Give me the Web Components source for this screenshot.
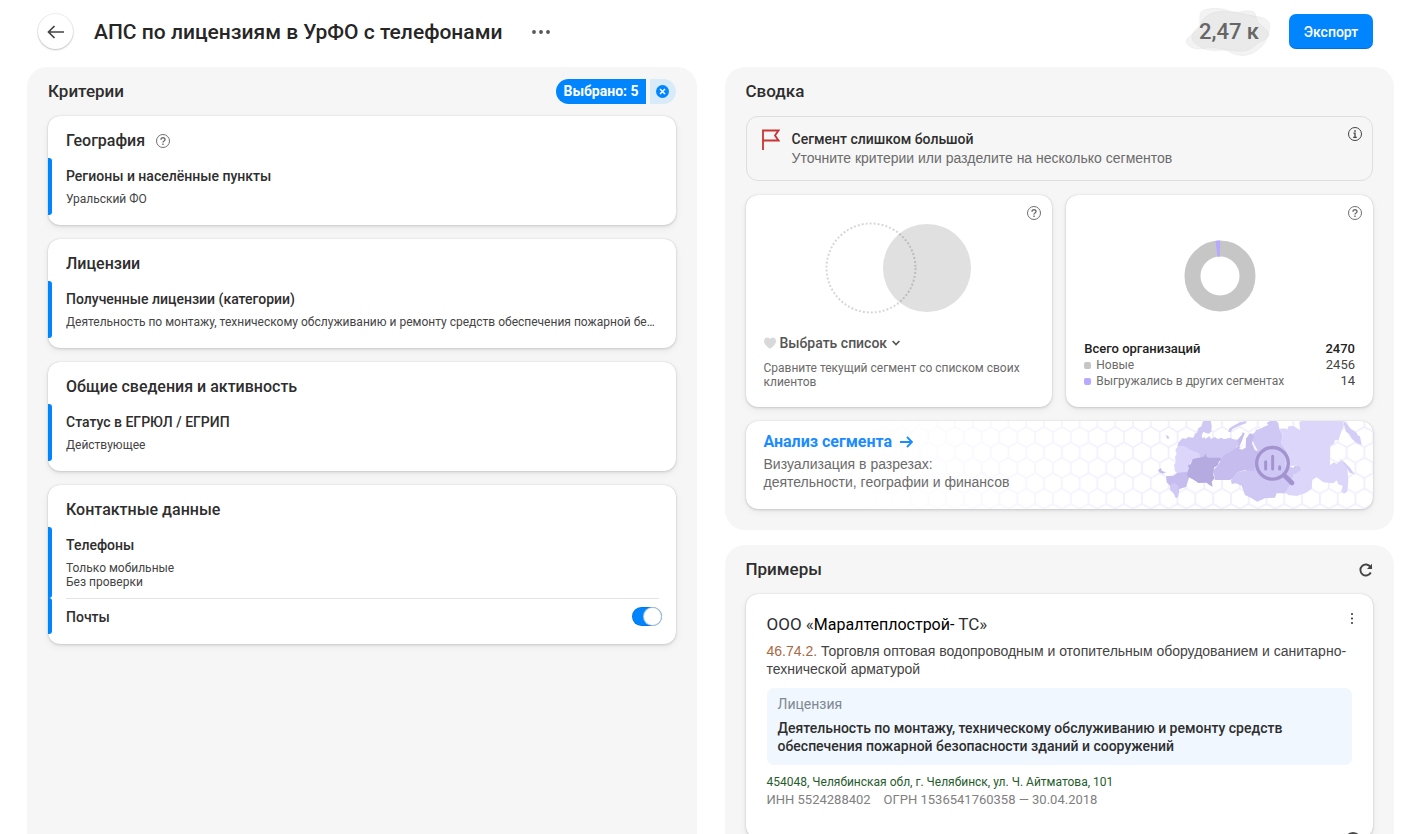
<!DOCTYPE html>
<html lang="ru">
<head>
<meta charset="utf-8">
<meta name="viewport" content="width=device-width, initial-scale=1">
<title>АПС по лицензиям в УрФО с телефонами</title>
<style>
  :root {
    --ui: Roboto, "Liberation Sans", sans-serif;
    --text: "Liberation Sans", Roboto, sans-serif;
    --ink: #2e2e2e;
    --muted: #6b6b6b;
    --blue: #0085ff;
    --panel: #f6f6f6;
    --shadow: 0 0 1px rgba(0,0,0,.2), 0 1px 3px rgba(0,0,0,.14), 0 3px 8px rgba(0,0,0,.05);
  }
  body { margin: 0; background: #fff; color: var(--ink); font: 14px/18px var(--ui); }
</style>
</head>
<body>
<segment-page></segment-page>

<script>
const define = (name, html, setup) => {
  const tpl = document.createElement('template');
  tpl.innerHTML = html;
  customElements.define(name, class extends HTMLElement {
    constructor() {
      super();
      this.attachShadow({ mode: 'open' }).append(tpl.content.cloneNode(true));
    }
    connectedCallback() { if (setup) setup.call(this, this.shadowRoot); }
  });
};

/* Small round hint mark: "?" by default, "i" with kind="info" */
define('hint-icon', `
<style>
  :host { display: block; width: 14px; height: 14px; }
  svg { display: block; width: 14px; height: 14px; overflow: visible; fill: none; stroke: #707070; }
  .i { display: none; }
  :host([kind=info]) .i { display: block; }
  :host([kind=info]) .q { display: none; }
  :host([kind=info]) svg { stroke: #444; }
</style>
<svg viewBox="0 0 14 14" aria-hidden="true">
  <circle cx="7" cy="7" r="6.5"/>
  <g class="q" stroke-width="1.4"><path d="M5 5.7C5 4.400 5.900 3.700 7 3.700s2 .7 2 1.800c0 1.500-2 1.400-2 3"/><path d="M7 9.500v1.400"/></g>
  <g class="i" stroke-width="1.600"><path d="M5.500 6.200H7v4.200M5.200 10.400h3.600" stroke-width="1.300"/><path d="M7 3.200v1.500"/></g>
</svg>`);

define('count-blob', `
<style>
  :host { display: grid; place-items: center; width: 86px; height: 48px; }
  svg, span { grid-area: 1 / 1; }
  svg { width: 86px; height: 48px; }
  span { padding-left: 2px; color: #666; font: 500 22px/26px var(--ui); }
</style>
<svg viewBox="135 20 258 147" aria-hidden="true">
  <g fill="#d0d0d0" fill-opacity=".26" stroke="#bbb" stroke-opacity=".22" stroke-width="2">
    <path d="M178 45C178 25 200 20 240 22C265 24 270 34 300 32C330 26 350 26 351 50C352 70 388 82 390 102C385 120 365 118 350 132C325 160 290 152 262 148C225 152 190 155 160 125C145 110 158 90 175 78C180 68 177 58 178 45Z"/>
    <path d="M180 75C185 40 225 30 255 30C290 36 320 38 350 46C390 50 396 68 390 90C383 110 384 125 362 142C340 166 305 172 275 158C250 142 225 142 200 142C175 150 140 145 136 122C138 104 170 95 180 75Z"/>
  </g>
</svg>
<span><slot></slot></span>`);

define('page-header', `
<style>
  :host { display: flex; align-items: center; box-sizing: border-box; min-height: 67px; padding: 0 45px 4px 38px; }
  button { border: 0; padding: 0; background: none; cursor: pointer; font: inherit; }
  .back { display: grid; place-items: center; width: 35px; height: 35px; border-radius: 50%; background: #fff; box-shadow: 0 0 0 1px rgba(0,0,0,.06), 0 1px 2px rgba(0,0,0,.2); }
  h1 { margin: 0 28px 0 21px; font: 500 21px/28px var(--ui); color: #262626; }
  .export { margin-left: 18px; width: 84px; height: 35px; border-radius: 7px; background: var(--blue); color: #fff; font: 500 14px/20px var(--ui); box-shadow: inset 0 -1px 0 rgba(0,0,0,.15); }
  count-blob { margin-left: auto; }
  svg { display: block; }
</style>
<button class="back" aria-label="Назад">
  <svg width="18" height="14" viewBox="0 0 18 14" fill="none" stroke="#444" stroke-width="1.700"><path d="M17 7H2M7.500 1L1.500 7l6 6"/></svg>
</button>
<h1><slot></slot></h1>
<button aria-label="Ещё">
  <svg width="22" height="20" viewBox="0 0 22 20" fill="#555"><circle cx="4" cy="10" r="1.900"/><circle cx="11" cy="10" r="1.900"/><circle cx="18" cy="10" r="1.900"/></svg>
</button>
<count-blob>2,47 к</count-blob>
<button class="export">Экспорт</button>`);

define('side-panel', `
<style>
  :host { display: block; box-sizing: border-box; min-width: 0; padding: 0 21px 21px; border-radius: 20px; background: var(--panel); }
  header { display: flex; align-items: center; justify-content: space-between; height: 49px; }
  h2 { margin: 0 0 2px; font: 500 17px/24px var(--ui); }
  .body { display: grid; gap: 14px; }
</style>
<header><h2><slot name="title"></slot></h2><slot name="action"></slot></header>
<div class="body"><slot></slot></div>`);

define('selected-count', `
<style>
  :host { display: flex; gap: 4px; }
  button { height: 25px; border: 0; padding: 0 8px; font: 700 14px/25px var(--ui); cursor: pointer; }
  .count { padding: 0 7px; border-radius: 13px 0 0 13px; background: var(--blue); color: #fff; }
  .clear { width: 26px; padding: 0 6px; border-radius: 0 13px 13px 0; background: #d9eaf9; }
  svg { display: block; }
</style>
<button class="count"><slot></slot></button>
<button class="clear" aria-label="Сбросить">
  <svg width="13" height="13" viewBox="0 0 13 13"><circle cx="6.500" cy="6.500" r="6.500" fill="#0085ff"/><path d="M4 4l5 5M9 4L4 9" stroke="#fff" stroke-width="1.500"/></svg>
</button>`);

define('criteria-card', `
<style>
  :host { display: block; min-width: 0; padding: 13px 0 10px; border-radius: 12px; background: #fff; box-shadow: var(--shadow); }
  header { display: flex; align-items: center; gap: 11px; padding: 0 18px 5px; }
  h3 { margin: 0; font: 500 16px/24px var(--ui); }
</style>
<header><h3><slot name="title"></slot></h3><slot name="hint"></slot></header>
<slot></slot>`);

define('criteria-item', `
<style>
  :host { display: flex; position: relative; padding: 0 17px 0 18px; }
  :host::before { content: ""; position: absolute; inset: 0 auto 0 0; width: 4px; border-radius: 0 3px 3px 0; background: var(--blue); }
  .text { flex: 1; min-width: 0; padding: 8px 0 9px; }
  h4 { margin: 0; font: 500 14px/20px var(--ui); }
  ::slotted(p) { margin: 6px 0 0; color: #444; font: 12px/14px var(--ui); overflow: hidden; white-space: nowrap; text-overflow: ellipsis; }
  :host([divided]) { align-items: center; }
  :host([divided]) .text { padding: 8px 0 7px; border-top: 1px solid #e3e3e3; }
  ::slotted([slot=control]) { margin: 0 -3px 0 -27px; }
</style>
<div class="text"><h4><slot name="title"></slot></h4><slot></slot></div>
<slot name="control"></slot>`);

define('toggle-switch', `
<style>
  :host { display: block; }
  input { display: block; appearance: none; box-sizing: border-box; width: 30px; height: 19px; margin: 0; border-radius: 10px; background: #ccc; cursor: pointer; box-shadow: inset 0 0 0 1px rgba(0,0,0,.1); }
  input::before { content: ""; display: block; width: 17px; height: 17px; margin: 1px; border-radius: 50%; background: #fff; box-shadow: 0 0 0 1px rgba(200,205,210,.9); }
  input:checked { background: var(--blue); }
  input:checked::before { margin-left: 12px; }
</style>
<input type="checkbox" role="switch" checked>`,
function (root) { root.querySelector('input').setAttribute('aria-label', this.getAttribute('label')); });

define('warning-box', `
<style>
  :host { display: flex; align-items: flex-start; box-sizing: border-box; min-height: 65px; padding: 12px 10px 0 14px; border: 1px solid #dedede; border-radius: 12px; }
  .flag { margin: 0 12px 0 1px; }
  .text { flex: 1; }
  h3 { margin: 0; font: 500 14px/20px var(--ui); }
  p { margin: 0; color: var(--muted); font: 14px/19px var(--text); }
  hint-icon { margin-top: -2px; }
</style>
<svg class="flag" width="18" height="21" viewBox="0 0 18 21" fill="none" stroke="#c93434" stroke-width="1.800" aria-hidden="true"><path d="M1 21V1.500h15.500l-3.500 5 3.500 5H1"/></svg>
<div class="text"><h3><slot name="title"></slot></h3><p><slot></slot></p></div>
<hint-icon kind="info"></hint-icon>`);

define('stat-card', `
<style>
  :host { display: flex; flex-direction: column; position: relative; box-sizing: border-box; min-width: 0; min-height: 212px; padding: 11px 18px 18px; border-radius: 12px; background: #fff; box-shadow: var(--shadow); }
  hint-icon { position: absolute; top: 11px; right: 11px; }
  .figure { display: grid; flex: 1; place-items: start center; }
</style>
<hint-icon></hint-icon>
<div class="figure"><slot name="figure"></slot></div>
<slot></slot>`);

define('list-compare', `
<style>
  :host { display: block; }
  .pick { display: flex; align-items: center; margin-bottom: 8px; color: #555; }
  select { appearance: none; field-sizing: content; border: 0; margin: 0 5px 0 4px; padding: 0; background: none; color: #555; font: 500 14px/20px var(--ui); }
  p { margin: 0; color: var(--muted); font: 12px/14px var(--ui); max-width: 264px; }
</style>
<div class="pick">
  <svg width="12" height="12" viewBox="0 0 12 12" fill="#d9d9d9" aria-hidden="true"><path d="M6 11.800C3 9.800 0 7 0 3.900 0 1.800 1.500.5 3.200.5 4.500.5 5.500 1.200 6 2.200 6.500 1.200 7.500.5 8.800.5 10.500.5 12 1.800 12 3.900c0 3.100-3 5.900-6 7.900z"/></svg>
  <select aria-label="Список клиентов"><option>Выбрать список</option></select>
  <svg width="8" height="6" viewBox="0 0 8 6" fill="none" stroke="#555" stroke-width="1.700" aria-hidden="true"><path d="M.6 1L4 4.500 7.400 1"/></svg>
</div>
<p><slot></slot></p>`);

define('venn-figure', `
<style>:host, svg { display: block; } :host { margin-top: 16px; }</style>
<svg width="148" height="92" viewBox="0 0 148 92" aria-hidden="true">
  <circle cx="102" cy="46" r="44" fill="#e0e0e0"/>
  <circle cx="46" cy="46" r="44.500" fill="none" stroke="#000" stroke-opacity=".16" stroke-width="2" stroke-dasharray="2 2"/>
</svg>`);

define('donut-figure', `
<style>:host, svg { display: block; } :host { margin-top: 34px; }</style>
<svg width="72" height="72" viewBox="0 0 72 72" fill="none" stroke-width="16" aria-hidden="true">
  <circle cx="36" cy="36" r="27.500" stroke="#c6c6c6"/>
  <path d="M32.500 8.700A27.500 27.500 0 0 1 36 8.500" stroke="#b9a8ff"/>
</svg>`);

define('totals-table', `
<style>
  :host { display: block; }
  table { width: 100%; border-collapse: collapse; font: 12px/16px var(--ui); }
  th, td { padding: 0; text-align: left; font-weight: 400; color: var(--muted); }
  td { text-align: right; font-size: 13px; color: #444; }
  .sum th, .sum td { font-weight: 500; color: #222; font-size: 13px; }
  i { display: inline-block; width: 7px; height: 7px; margin-right: 5px; border-radius: 2px; background: #c6c6c6; }
  i.old { background: #b9a8ff; }
</style>
<table>
  <tr class="sum"><th scope="row">Всего организаций</th><td>2470</td></tr>
  <tr><th scope="row"><i></i>Новые</th><td>2456</td></tr>
  <tr><th scope="row"><i class="old"></i>Выгружались в других сегментах</th><td>14</td></tr>
</table>`);

define('russia-map', `
<style>:host, svg { display: block; }</style>
<svg width="520" height="88" viewBox="0 0 520 88" aria-hidden="true">
  <defs>
    <pattern id="hex" width="53.400" height="92.400" patternUnits="userSpaceOnUse" x="136" y="235.600">
      <path d="M0 0V30.800L26.700 46.200L53.400 30.800V0M26.700 46.200V77L0 92.400M26.700 77L53.400 92.400" fill="none" stroke="#f0ecfd" stroke-width="4.500"/>
    </pattern>
    <linearGradient id="fade"><stop offset="0" stop-color="#fff" stop-opacity="0"/><stop offset=".6" stop-color="#fff"/></linearGradient>
    <mask id="m"><rect width="520" height="88" fill="url(#fade)"/></mask>
  </defs>
  <g mask="url(#m)"><g transform="translate(297 -6) scale(.3333)"><rect x="-900" y="0" width="1600" height="320" fill="url(#hex)"/></g></g>
  <g transform="translate(297 -6) scale(.3333)" stroke-linejoin="round">
    <g fill="#cfc8f4">
      <path d="M82 93L86 82 97 70 108 71 115 66 130 68 135 57 142 52 145 40 154 34 158 22 164 10H180L185 30 184 50 176 56 166 53 160 50 155 62 157 70 165 66 166 72 178 63 183 72 195 66 203 72 215 68 222 73 240 68 250 73 264 74 262 90 255 105 240 118 215 135 200 130 168 132 140 122 120 108Z"/>
      <path d="M300 62L315 52 318 44 330 42 340 36 355 30 350 24 360 18 372 12 385 24 388 42 398 60 394 85 412 110 405 150 430 158 434 152 448 150 455 165 440 178 430 180 425 205 405 235 380 235 375 248 345 250 322 260 305 250 285 240 275 212 258 205 245 207 243 195 262 172 315 160 322 105Z"/>
      <path d="M235 50L238 40 250 32 270 22 290 18 288 25 268 32 248 42 242 52ZM47 61L54 62 58 68 53 73Z"/>
    </g>
    <path fill="#dcd6fb" d="M84 93L100 92 122 105 148 115 150 126 128 134 118 150 112 172 85 178 75 168 72 150 77 142 75 125 80 118 76 105ZM388 42L405 40 412 44 415 34 430 33 450 46 448 22 460 14H575L582 30 572 55 566 74 555 76 552 86 541 92 540 150 552 142 560 147 570 138 583 142 592 152 595 200 592 230 582 236 574 230 578 212 565 208 560 196 550 205 520 202 500 187 487 195 485 222 465 235 440 243 415 240 405 232 425 205 430 180 455 165 448 150 405 155 412 110 394 85 398 60Z"/>
    <path fill="#d4cdf7" d="M578 14L592 28 602 42 618 52 625 62 630 64 635 90 620 84 606 72 596 56 588 50ZM568 130L585 143 600 158 614 178 600 174 590 158Z"/>
    <path fill="#c6bdee" d="M48 184L70 182 82 174 110 170 118 186 108 216 88 222 84 245 78 249 72 236 62 226 60 212 50 202ZM24 166L33 159 36 168 48 172 38 176 28 172ZM213 132L222 120 240 112 262 95 262 75 275 60 278 52 284 55 278 72 268 95 276 100 285 92 286 68 294 62 302 54 312 62 306 86 315 105 325 110 318 150 312 168 285 165 262 172 248 190 240 195 195 195 190 165 205 150Z"/>
    <path fill="#d0c8f5" d="M60 210L74 203 84 212 86 222 84 245 78 249 72 236 62 226Z"/>
    <path fill="#b5abe0" d="M128 132L150 127 162 125 166 115 170 126 178 128H210L214 134 206 140 205 150 192 158 190 180 194 190 185 200 188 215 178 210 170 203 145 204 132 195 115 186 110 178 116 160 114 150 122 148Z"/>
    <path fill="#fff" d="M267 100L275 104 287 98 288 70 294 64 286 62 280 72 279 92Z"/>
    <g fill="none" stroke="#a394d0">
      <circle cx="367.500" cy="145" r="47.500" stroke-width="10" fill="#cfc8f4" fill-opacity=".5"/>
      <path d="M403 181L426 204" stroke-width="14" stroke-linecap="round"/>
      <path d="M347 140V162M368 124V162M389 155V162" stroke-width="9" stroke-linecap="round"/>
    </g>
  </g>
</svg>`);

define('analysis-card', `
<style>
  :host { display: block; position: relative; box-sizing: border-box; min-height: 88px; padding: 9px 18px 17px; border-radius: 12px; background: #fff; box-shadow: var(--shadow); overflow: hidden; }
  russia-map { position: absolute; top: 0; right: 0; }
  .text { position: relative; }
  a { display: inline-flex; align-items: center; gap: 8px; color: #1a8cff; text-decoration: none; font: 700 16px/24px var(--ui); }
  p { margin: 1px 0 0; color: var(--muted); font: 14px/18px var(--text); }
</style>
<russia-map></russia-map>
<div class="text">
  <a href="#analysis">Анализ сегмента <svg width="13" height="12" viewBox="0 0 13 12" fill="none" stroke="currentColor" stroke-width="1.800" aria-hidden="true"><path d="M0 6h12M7 1l5 5-5 5"/></svg></a>
  <p>Визуализация в разрезах:<br>деятельности, географии и финансов</p>
</div>`);

define('refresh-button', `
<style>
  button { display: block; border: 0; padding: 0; background: none; cursor: pointer; }
  svg { display: block; }
</style>
<button aria-label="Обновить">
  <svg width="14" height="14" viewBox="0 0 14 14" fill="none" stroke="#444" stroke-width="1.900"><path d="M11.800 9.500A5.500 5.500 0 1 1 11.500 4L12.500 5.500"/><path d="M13 .8V6H8z" fill="#444" stroke="none"/></svg>
</button>`);

define('company-card', `
<style>
  :host { display: block; position: relative; box-sizing: border-box; padding: 19px 21px 30px; border-radius: 12px; background: #fff; box-shadow: var(--shadow); }
  button { position: absolute; border: 0; padding: 0; background: none; cursor: pointer; }
  button svg { display: block; }
  .more { top: 17px; right: 18px; }
  .help { bottom: -12px; right: 11px; }
  h3 { margin: 0 0 6px; font: 400 17px/22px var(--ui); }
  h3 b { font-weight: 400; font-size: 16px; color: #000; }
  .desc { margin: 0 0 10px; color: #444; font: 14px/18px var(--text); }
  .desc span { color: #a8693f; }
  .license { padding: 8px 11px 10px; border-radius: 7px; background: #f0f7ff; }
  .license span { display: block; margin-bottom: 7px; color: #808891; font: 14px/16px var(--ui); }
  .license p { margin: 0; font: 500 14px/18px var(--ui); }
  address { margin-top: 9px; color: #1f5c2c; font: 12px/17px var(--ui); }
  .ids { display: flex; gap: 13px; color: #808080; font: 13px/17px var(--ui); }
</style>
<button class="more" aria-label="Действия">
  <svg width="6" height="14" viewBox="0 0 6 14" fill="#444"><circle cx="3" cy="3" r="1.100"/><circle cx="3" cy="7.500" r="1.100"/><circle cx="3" cy="12" r="1.100"/></svg>
</button>
<h3>ООО «<b>Маралтеплострой-</b> ТС»</h3>
<p class="desc"><span>46.74.2.</span> Торговля оптовая водопроводным и отопительным оборудованием и санитарно-технической арматурой</p>
<div class="license"><span>Лицензия</span><p>Деятельность по монтажу, техническому обслуживанию и ремонту средств обеспечения пожарной безопасности зданий и сооружений</p></div>
<address>454048, Челябинская обл, г. Челябинск, ул. Ч. Айтматова, 101</address>
<div class="ids"><span>ИНН 5524288402</span><span>ОГРН 1536541760358 — 30.04.2018</span></div>
<button class="help" aria-label="Помощь"><svg width="18" height="18" viewBox="0 0 18 18"><circle cx="9" cy="9" r="9" fill="#4a4a4a"/></svg></button>`);

define('segment-page', `
<style>
  :host { display: block; }
  main { display: grid; grid-template-columns: minmax(0, 1fr) minmax(0, 1fr); gap: 28px; padding: 0 24px 0 27px; }
  .column { display: grid; align-content: start; gap: 15px; }
  .pair { display: grid; grid-template-columns: minmax(0, 1fr) minmax(0, 1fr); gap: 14px; }
</style>
<page-header>АПС по лицензиям в УрФО с телефонами</page-header>
<main>
  <side-panel>
    <span slot="title">Критерии</span>
    <selected-count slot="action">Выбрано: 5</selected-count>
    <criteria-card>
      <span slot="title">География</span><hint-icon slot="hint"></hint-icon>
      <criteria-item><span slot="title">Регионы и населённые пункты</span><p>Уральский ФО</p></criteria-item>
    </criteria-card>
    <criteria-card>
      <span slot="title">Лицензии</span>
      <criteria-item><span slot="title">Полученные лицензии (категории)</span><p>Деятельность по монтажу, техническому обслуживанию и ремонту средств обеспечения пожарной безопасности зданий и сооружений</p></criteria-item>
    </criteria-card>
    <criteria-card>
      <span slot="title">Общие сведения и активность</span>
      <criteria-item><span slot="title">Статус в ЕГРЮЛ / ЕГРИП</span><p>Действующее</p></criteria-item>
    </criteria-card>
    <criteria-card>
      <span slot="title">Контактные данные</span>
      <criteria-item><span slot="title">Телефоны</span><p>Только мобильные<br>Без проверки</p></criteria-item>
      <criteria-item divided><span slot="title">Почты</span><toggle-switch slot="control" label="Почты"></toggle-switch></criteria-item>
    </criteria-card>
  </side-panel>
  <div class="column">
    <side-panel>
      <span slot="title">Сводка</span>
      <warning-box><span slot="title">Сегмент слишком большой</span>Уточните критерии или разделите на несколько сегментов</warning-box>
      <div class="pair">
        <stat-card><venn-figure slot="figure"></venn-figure><list-compare>Сравните текущий сегмент со списком своих клиентов</list-compare></stat-card>
        <stat-card><donut-figure slot="figure"></donut-figure><totals-table></totals-table></stat-card>
      </div>
      <analysis-card></analysis-card>
    </side-panel>
    <side-panel>
      <span slot="title">Примеры</span>
      <refresh-button slot="action"></refresh-button>
      <company-card></company-card>
    </side-panel>
  </div>
</main>`);
</script>
</body>
</html>
